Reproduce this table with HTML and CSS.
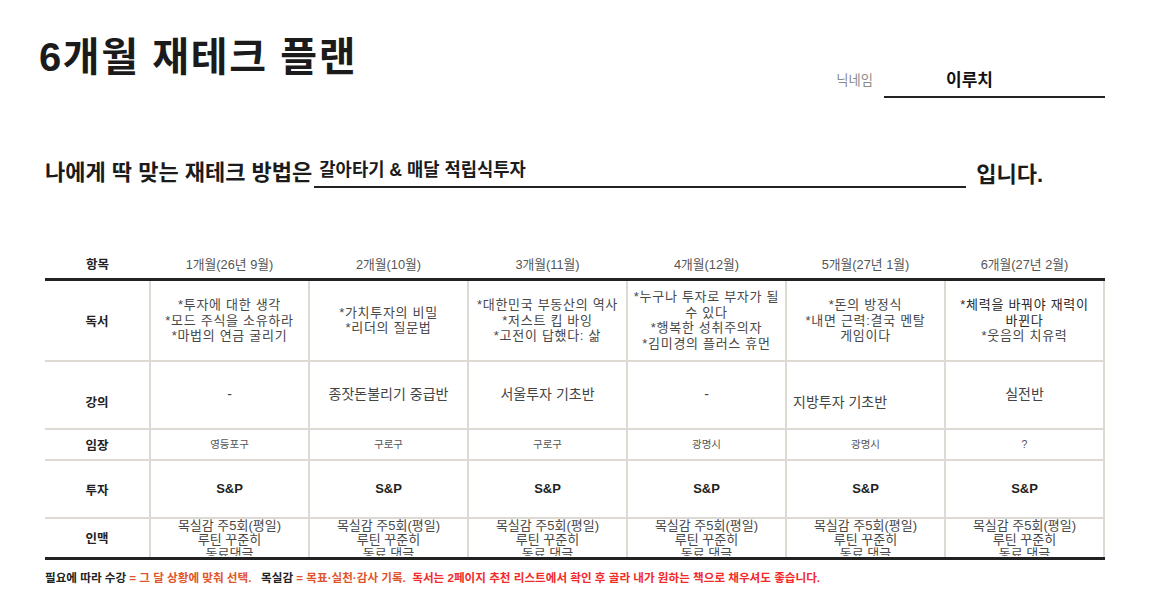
FILE: index.html
```html
<!DOCTYPE html>
<html lang="ko">
<head>
<meta charset="utf-8">
<title>6개월 재테크 플랜</title>
<link rel="stylesheet" href="styles.css">
</head>
<body>
<div class="page">
  <header class="top">
    <h1 class="title">6개월 재테크 플랜</h1>
    <div class="nick">
      <span class="nick-label">닉네임</span>
      <span class="nick-value">이루치</span>
    </div>
  </header>

  <div class="method">
    <span class="method-lead">나에게 딱 맞는 재테크 방법은</span>
    <span class="method-blank">갈아타기 &amp; 매달 적립식투자</span>
    <span class="method-end">입니다.</span>
  </div>

  <table class="plan">
    <colgroup>
      <col class="col-label">
      <col><col><col><col><col><col>
    </colgroup>
    <thead>
      <tr class="row-head">
        <th class="label">항목</th>
        <th>1개월(26년 9월)</th>
        <th>2개월(10월)</th>
        <th>3개월(11월)</th>
        <th>4개월(12월)</th>
        <th>5개월(27년 1월)</th>
        <th>6개월(27년 2월)</th>
      </tr>
    </thead>
    <tbody>
      <tr class="row-book">
        <th class="label">독서</th>
        <td>*투자에 대한 생각<br>*모드 주식을 소유하라<br>*마법의 연금 굴리기</td>
        <td>*가치투자의 비밀<br>*리더의 질문법</td>
        <td>*대한민국 부동산의 역사<br>*저스트 킵 바잉<br>*고전이 답했다: 삶</td>
        <td>*누구나 투자로 부자가 될<br>수 있다<br>*행복한 성취주의자<br>*김미경의 플러스 휴먼</td>
        <td>*돈의 방정식<br>*내면 근력:결국 멘탈<br>게임이다</td>
        <td><span class="dark">*체력을 바꿔야 재력이<br>바뀐다</span><br>*웃음의 치유력</td>
      </tr>
      <tr class="row-class">
        <th class="label">강의</th>
        <td>-</td>
        <td>종잣돈불리기 중급반</td>
        <td>서울투자 기초반</td>
        <td>-</td>
        <td class="shift">지방투자 기초반</td>
        <td>실전반</td>
      </tr>
      <tr class="row-site">
        <th class="label">임장</th>
        <td>영등포구</td>
        <td>구로구</td>
        <td>구로구</td>
        <td>광명시</td>
        <td>광명시</td>
        <td>?</td>
      </tr>
      <tr class="row-invest">
        <th class="label">투자</th>
        <td>S&amp;P</td>
        <td>S&amp;P</td>
        <td>S&amp;P</td>
        <td>S&amp;P</td>
        <td>S&amp;P</td>
        <td>S&amp;P</td>
      </tr>
      <tr class="row-people">
        <th class="label">인맥</th>
        <td><div class="clip">목실감 주5회(평일)<br>루틴 꾸준히<br>동료댓글</div></td>
        <td><div class="clip">목실감 주5회(평일)<br>루틴 꾸준히<br>동료 댓글</div></td>
        <td><div class="clip">목실감 주5회(평일)<br>루틴 꾸준히<br>동료 댓글</div></td>
        <td><div class="clip">목실감 주5회(평일)<br>루틴 꾸준히<br>동료 댓글</div></td>
        <td><div class="clip">목실감 주5회(평일)<br>루틴 꾸준히<br>동료 댓글</div></td>
        <td><div class="clip">목실감 주5회(평일)<br>루틴 꾸준히<br>동료 댓글</div></td>
      </tr>
    </tbody>
  </table>

  <p class="note">
    <span class="k">필요에 따라 수강</span><span class="o"> = 그 달 상황에 맞춰 선택.</span>&nbsp;&nbsp;
    <span class="k">목실감</span><span class="o"> = 목표·실천·감사 기록.</span>&nbsp;&nbsp;<span class="r">독서는 2페이지 추천 리스트에서 확인 후 골라 내가 원하는 책으로 채우셔도 좋습니다.</span>
  </p>
</div>
</body>
</html>
```

FILE: styles.css
```css
* { box-sizing: border-box; }

html, body {
  margin: 0;
  background: #ffffff;
}

body {
  font-family: "Liberation Sans", "Noto Sans CJK KR", sans-serif;
  color: #222222;
}

.page {
  width: 1150px;
  height: 594px;
  padding: 0 45px;
  overflow: hidden;
}

/* ---------- header ---------- */
.top {
  display: flex;
  justify-content: space-between;
  align-items: flex-end;
  height: 98px;
}

.title {
  align-self: flex-start;
  margin: 33px 0 0 -6px;
  font-size: 40px;
  line-height: 48px;
  font-weight: 700;
  letter-spacing: 1.6px;
  color: #1b1b1b;
}

.nick {
  display: flex;
  align-items: flex-end;
}

.nick-label {
  font-size: 13.3px;
  color: #8a8a8a;
  margin-right: 11px;
  padding-bottom: 9px;
}

.nick-value {
  width: 221px;
  padding: 0 0 5px 62px;
  border-bottom: 2px solid #222;
  font-size: 17px;
  font-weight: 700;
  color: #111;
}

/* ---------- method line ---------- */
.method {
  display: flex;
  align-items: flex-end;
  margin-top: 50px;
  height: 40px;
}

.method-lead {
  font-size: 22px;
  font-weight: 700;
  padding-bottom: 2px;
  color: #1b1b1b;
}

.method-blank {
  width: 652px;
  margin-left: 2px;
  padding: 0 0 5px 5px;
  border-bottom: 2px solid #222;
  font-size: 17.7px;
  font-weight: 700;
  color: #1b1b1b;
}

.method-end {
  margin-left: 10px;
  padding-bottom: 0;
  font-size: 22px;
  font-weight: 700;
  color: #1b1b1b;
}

/* ---------- table ---------- */
.plan {
  width: 1060px;
  margin-top: 62px;
  border-collapse: collapse;
  table-layout: fixed;
}

.col-label { width: 105px; }

.plan th,
.plan td {
  padding: 0 4px;
  text-align: center;
  vertical-align: middle;
  font-weight: 400;
}

.plan td {
  border: 2px solid #dedad3;
  color: #484848;
  font-size: 13px;
  line-height: 15.5px;
}

.plan tbody th.label {
  border-top: 2px solid #dedad3;
  border-bottom: 2px solid #dedad3;
}

.plan .label {
  font-size: 12.5px;
  font-weight: 700;
  color: #222;
}

.row-head th {
  height: 29px;
  border-bottom: 3px solid #222;
  font-size: 12.8px;
  color: #555;
}

.row-head th.label { color: #222; }

.row-book td,
.row-book th { height: 82px; }

.row-book td { letter-spacing: 0.7px; }

.row-book .dark { color: #2a2a2a; }

.row-class td,
.row-class th { height: 68px; }

.row-class td { font-size: 14px; color: #444; }

.row-class th.label { padding-top: 12px; }

.row-class td.shift {
  text-align: left;
  padding: 16px 0 0 6px;
}

.row-site td,
.row-site th { height: 31px; }

.row-site td { font-size: 10.5px; color: #555; }

.row-invest td,
.row-invest th { height: 58px; }

.row-invest td {
  font-size: 13px;
  font-weight: 700;
  color: #222;
}

.row-people td,
.plan tbody .row-people th.label {
  height: 40px;
  border-bottom: 3px solid #222;
}

.row-people td { vertical-align: top; }

.clip {
  height: 37px;
  overflow: hidden;
  font-size: 13px;
  line-height: 14px;
  color: #484848;
}

/* ---------- footnote ---------- */
.note {
  margin: 9px 0 0;
  font-size: 11.6px;
  font-weight: 700;
  white-space: nowrap;
}

.note .k { color: #222; }
.note .o { color: #e0552e; }
.note .r { color: #f22a2a; }
```
